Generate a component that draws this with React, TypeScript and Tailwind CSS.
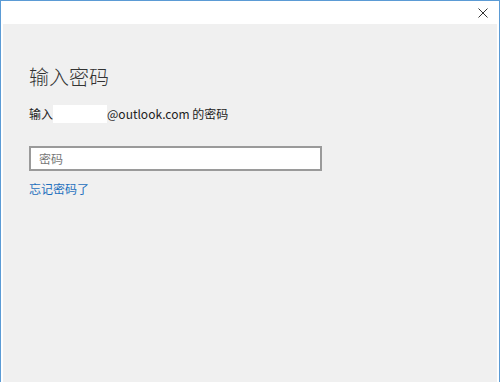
import React from 'react';

export default function App() {
  return (
    <div
      className="w-[500px] h-[382px] bg-white border-l border-r border-t border-[#5b9bd5] flex flex-col overflow-hidden"
      style={{ fontFamily: '"Microsoft YaHei", "Noto Sans CJK SC", "Liberation Sans", sans-serif' }}
    >
      {/* title bar */}
      <div className="h-[23px] flex items-center justify-end pr-[11px] shrink-0">
        <svg width="10" height="10" viewBox="0 0 10 10" className="mt-[1px]">
          <path d="M0.5 0.5 L9.5 9.5 M9.5 0.5 L0.5 9.5" stroke="#333" strokeWidth="1" />
        </svg>
      </div>

      <div className="flex-1 bg-[#f0f0f0] mx-[2px] pl-[26px] pt-[39px]">
        <h1 className="text-[20px] leading-[28px] font-light text-[#333]">输入密码</h1>

        <div className="mt-[13px] flex items-center text-[12px] leading-[20px] text-[#222]">
          <span>输入</span>
          <span className="w-[54px] h-[18px] bg-white" />
          <span>@outlook.com 的密码</span>
        </div>

        <div className="mt-[22px] w-[293px] h-[25px] border-2 border-[#9a9a9a] bg-white flex items-center pl-[8px]">
          <span className="text-[12px] text-[#777]">密码</span>
        </div>

        <div className="mt-[9px] text-[12px] leading-[18px] text-[#1d6fbd]">忘记密码了</div>
      </div>
    </div>
  );
}
